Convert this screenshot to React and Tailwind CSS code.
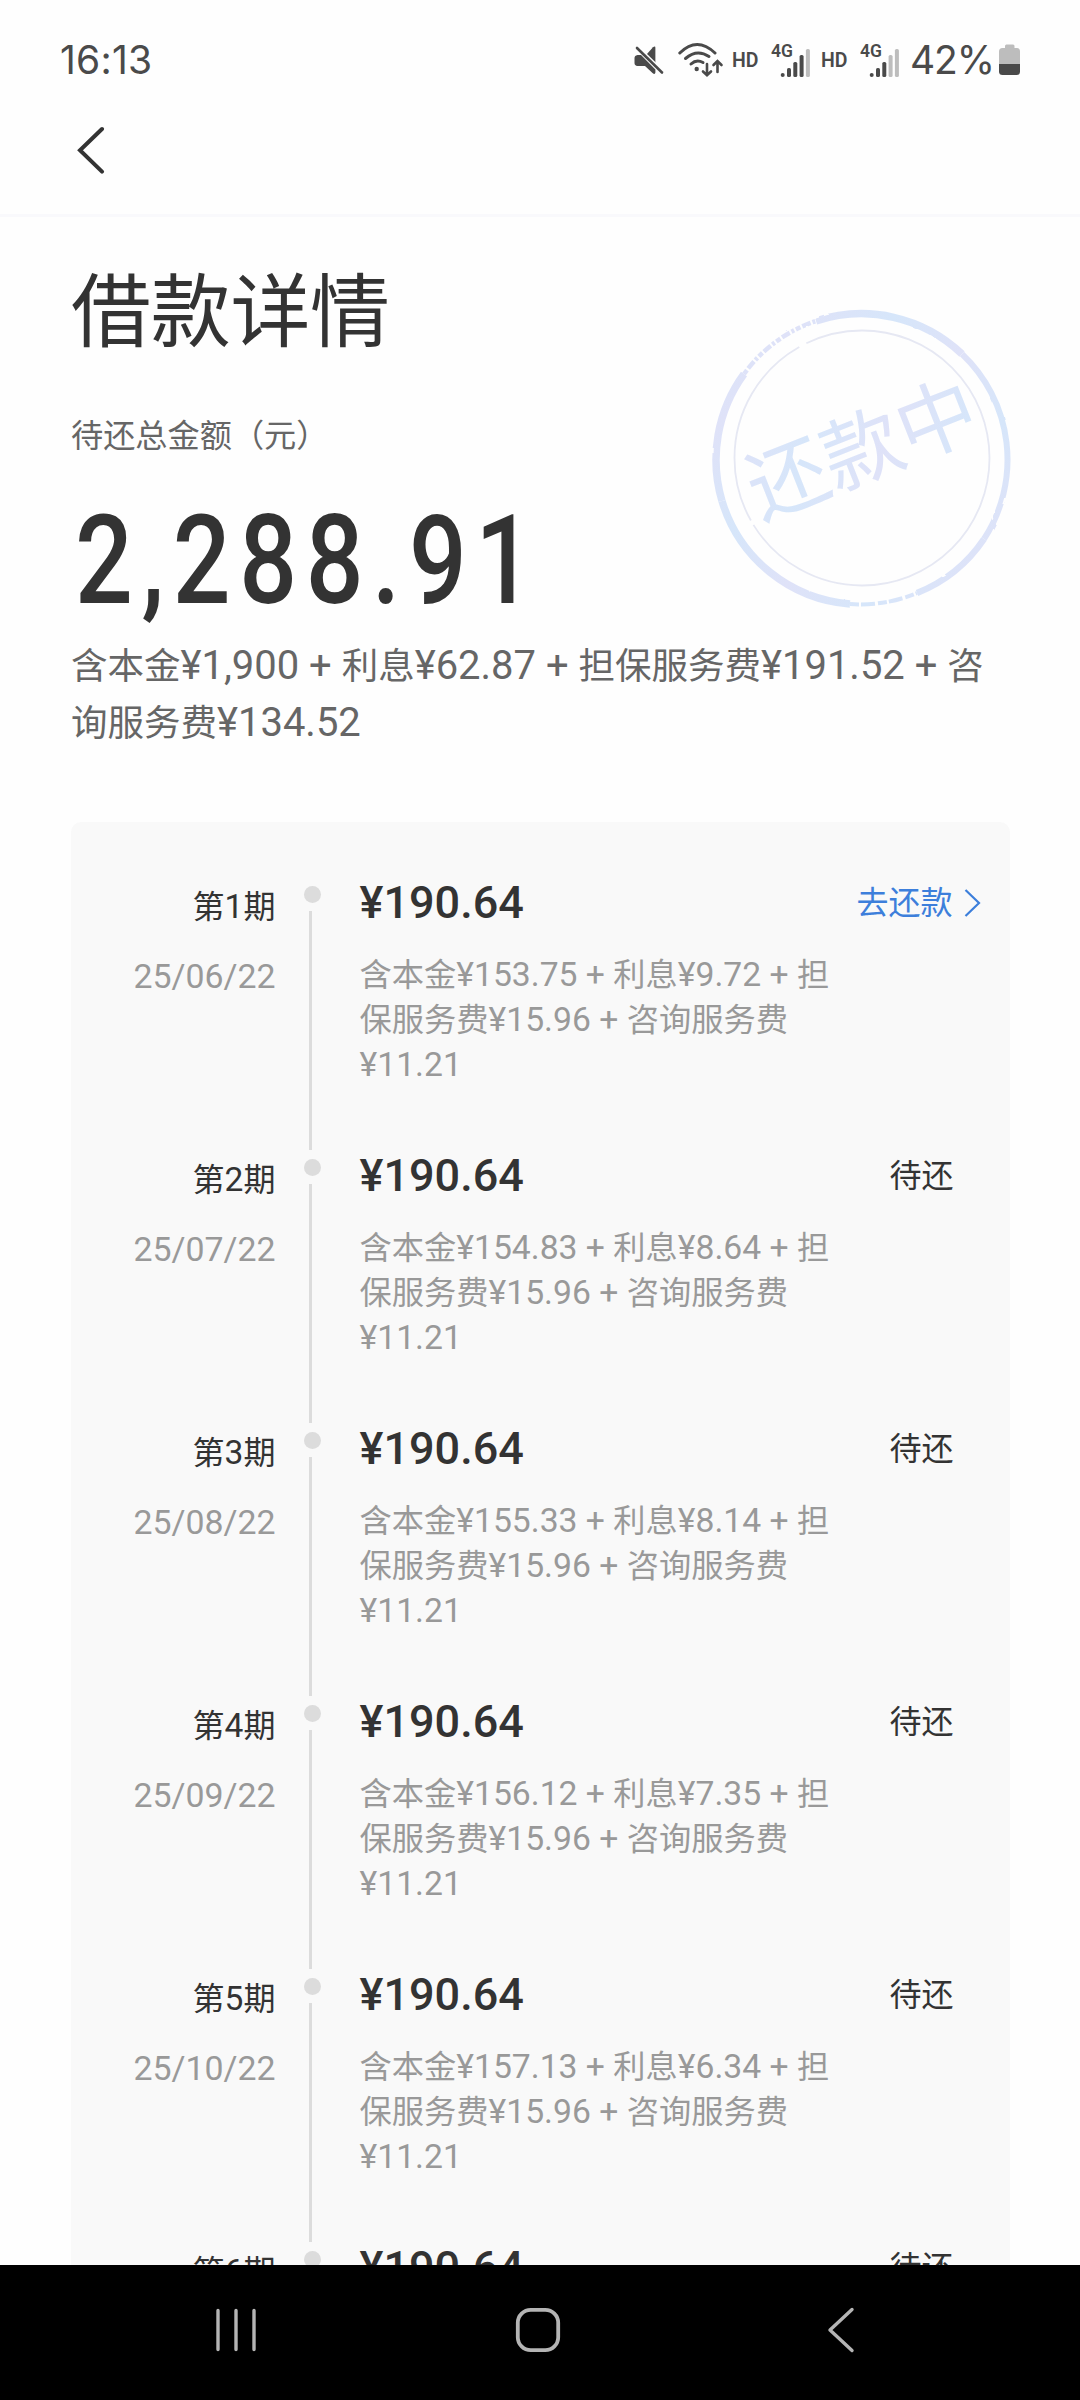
import React from "react";

const installments = [
  { no: 1, date: "25/06/22", principal: "153.75", interest: "9.72", active: true },
  { no: 2, date: "25/07/22", principal: "154.83", interest: "8.64" },
  { no: 3, date: "25/08/22", principal: "155.33", interest: "8.14" },
  { no: 4, date: "25/09/22", principal: "156.12", interest: "7.35" },
  { no: 5, date: "25/10/22", principal: "157.13", interest: "6.34" },
  { no: 6, date: "25/11/22", principal: "158.05", interest: "5.42" },
];

// Latin runs are set a little larger than the Chinese ones
const Mixed = ({ children, latin = "text-[1.045em]" }) =>
  children.split(/([\x20-\x7e¥]+)/).map((part, index) =>
    index % 2 === 1 ? (
      <span key={index} className={`leading-none ${latin}`}>
        {part}
      </span>
    ) : (
      part
    )
  );

const MuteIcon = () => (
  <svg className="w-[30px] h-[30px]" viewBox="0 0 30 30" fill="#4a4a4a">
    <path d="M12.5 9.5 L19 2.2 Q21.4 0.6 21.4 3 V18 Z" />
    <path d="M3 3 L28 27.5" stroke="#fefefe" strokeWidth="5.5" />
    <path d="M3 3 L28 27.5" stroke="#4a4a4a" strokeWidth="2.6" strokeLinecap="round" />
    <path d="M3.5 10 H7 L21.4 24.5 V27.5 Q21 30 18.5 28 L11 21 H3.5 Q0.5 20.5 0.5 18 V13 Q0.5 10.5 3.5 10 Z" />
  </svg>
);

const WifiIcon = () => (
  <svg className="w-[46px] h-[36px]" viewBox="0 0 46 36" fill="none" stroke="#4a4a4a" strokeLinecap="round">
    <path d="M1.8 11 Q19 -6 37 11" strokeWidth="3" />
    <path d="M7.5 16.5 Q19 6.5 31 14.5" strokeWidth="3" />
    <path d="M13 22 Q18.5 17 25 20.5" strokeWidth="3" />
    <circle cx="18.7" cy="27" r="2.2" fill="#4a4a4a" stroke="none" />
    <path d="M29 22 V33 M25 29.5 L29 33.3 L33 29.5" strokeWidth="2.6" />
    <path d="M39.5 30 V20 M35.5 23 L39.5 19 L43.5 23" strokeWidth="2.6" />
  </svg>
);

const SignalIcon = ({ level }) => (
  <svg className="w-[39px] h-[40px] -mt-[5px]" viewBox="0 -6 39 40">
    <text x="0" y="13.2" fontFamily="Roboto" fontWeight="600" fontSize="17.5" fill="#4a4a4a">
      4G
    </text>
    <circle cx="11.7" cy="31" r="2" fill="#4a4a4a" />
    {[24, 18, 11, 5].map((top, index) => (
      <rect
        key={top}
        x={16 + index * 6.3}
        y={top}
        width="4"
        height={33 - top}
        rx="1.6"
        fill={index < level ? "#4a4a4a" : "#bdbdbd"}
      />
    ))}
  </svg>
);

const BatteryIcon = () => (
  <svg className="w-[22px] h-[32px]" viewBox="0 0 22 32">
    <path d="M6 4 V2 Q6 0.5 7.5 0.5 H14 Q15.5 0.5 15.5 2 V4 H18 Q21 4 21 7.5 V20 H0 V7.5 Q0 4 3.5 4 Z" fill="#bdbdbd" />
    <path d="M0 20 H21 V27.5 Q21 31 17.5 31 H3.5 Q0 31 0 27.5 Z" fill="#4a4a4a" />
  </svg>
);

const StatusBar = () => (
  <div className="flex h-[120px] items-center pl-[60px] text-[#4a4a4a]">
    <span className="w-[574px] font-['Inter'] text-[39px] leading-[40px] tracking-[0.2px]">16:13</span>
    <MuteIcon />
    <span className="ml-[14px] flex">
      <WifiIcon />
    </span>
    <span className="ml-[8px] w-[30px] pt-[2px] text-[19.5px] font-semibold">HD</span>
    <span className="ml-[9px] flex">
      <SignalIcon level={3} />
    </span>
    <span className="ml-[11px] w-[30px] pt-[2px] text-[19.5px] font-semibold">HD</span>
    <span className="ml-[9px] flex">
      <SignalIcon level={2} />
    </span>
    <span className="ml-[11px] w-[89px] whitespace-nowrap font-['Inter'] text-[39px] leading-[40px] tracking-[-1.1px]">
      42%
    </span>
    <BatteryIcon />
  </div>
);

const Stamp = () => (
  <svg className="h-[300px] w-[300px]" viewBox="0 0 300 300" fill="none">
    <defs>
      <linearGradient id="ink" x1="0" y1="0" x2="60" y2="45" gradientUnits="userSpaceOnUse" spreadMethod="reflect">
        <stop offset="0" stopColor="#d6e6fa" />
        <stop offset="1" stopColor="#dfe2f8" />
      </linearGradient>
      <filter id="rough">
        <feTurbulence type="fractalNoise" baseFrequency="0.08" numOctaves="2" seed="4" />
        <feDisplacementMap in="SourceGraphic" scale="2" />
      </filter>
    </defs>
    <g stroke="url(#ink)" filter="url(#rough)">
      <path d="M250 45 A145.5 145.5 0 0 1 272 230" strokeWidth="6" />
      <path d="M138 295 A145.5 145.5 0 0 0 205 284" strokeWidth="4" strokeDasharray="9 2 14 3" />
      <path d="M32 65 A145.5 145.5 0 0 1 104 12" strokeWidth="4.5" strokeDasharray="5 2 9 2 3 2" />
      <path d="M104 12 A145.5 145.5 0 0 1 250 45" strokeWidth="7.5" />
      <path d="M32 65 A145.5 145.5 0 0 0 10 192" strokeWidth="7.5" />
      <path d="M10 192 A145.5 145.5 0 0 0 138 295" strokeWidth="7.5" />
      <path d="M272 230 A145.5 145.5 0 0 1 205 284" strokeWidth="6.5" />
    </g>
    <circle cx="150" cy="149" r="127.5" stroke="#e6e8f3" strokeWidth="1.8" strokeDasharray="330 5 200 8" />
    <text
      x="150"
      y="169"
      transform="rotate(-21.5 150 140)"
      textAnchor="middle"
      fontFamily="'Noto Sans CJK SC', sans-serif"
      fontSize="80"
      fill="url(#ink)"
    >
      还款中
    </text>
  </svg>
);

const InstallmentRow = ({ item }) => (
  <div className="flex h-[273px] shrink-0">
    <div className="w-[205px] text-right text-[32.1px]">
      <p className="leading-[48px] text-[#333333]">
        <Mixed>{`第${item.no}期`}</Mixed>
      </p>
      <p className="mt-[22px] leading-[48px] text-[#999999]">
        <Mixed latin="text-[1.055em]">{item.date}</Mixed>
      </p>
    </div>
    <div className="flex w-[84px] flex-col items-start pl-[28px]">
      <div className="mt-[3px] h-[17px] w-[17px] rounded-full bg-[#dcdcdc]" />
      <div className="ml-[5px] mt-[8px] h-[239px] w-[3px] bg-[#dcdcdc]" />
    </div>
    <div className="w-[480px]">
      <p className="-mt-[4px] text-[45px] font-medium leading-[48px] text-[#333333]">¥190.64</p>
      <p className="mt-[26px] whitespace-nowrap text-[32.25px] leading-[45px] text-[#999999]">
        <Mixed>{`含本金¥${item.principal} + 利息¥${item.interest} + 担`}</Mixed>
        <br />
        <Mixed>保服务费¥15.96 + 咨询服务费</Mixed>
        <br />
        <Mixed>¥11.21</Mixed>
      </p>
    </div>
    <div className="-mt-[4px] flex flex-1 justify-end text-[32px] leading-[48px]">
      {item.active ? (
        <span className="flex h-[48px] items-center pr-[29px] text-[#3d7fdb]">
          去还款
          <svg className="ml-[11px] h-[30px] w-[17px]" viewBox="0 0 17 30" fill="none" stroke="#3d7fdb" strokeWidth="2.2">
            <path d="M1.5 2 L15 15 L1.5 28" />
          </svg>
        </span>
      ) : (
        <span className="pr-[56px] text-[#333333]">待还</span>
      )}
    </div>
  </div>
);

const NavBar = () => (
  <div className="flex h-[135px] shrink-0 items-center bg-black pl-[214px] pb-[5px]">
    <svg className="h-[46px] w-[44px]" viewBox="0 0 44 46" stroke="#b4b4b4" strokeWidth="3.4" strokeLinecap="round">
      <path d="M4 3.5 V42.5 M22 3.5 V42.5 M40 3.5 V42.5" />
    </svg>
    <svg className="ml-[257px] h-[46px] w-[46px]" viewBox="0 0 46 46" fill="none" stroke="#b4b4b4" strokeWidth="3.8">
      <rect x="2.8" y="2.8" width="40.4" height="40.4" rx="13" />
    </svg>
    <svg
      className="ml-[265px] h-[48px] w-[30px]"
      viewBox="0 0 30 48"
      fill="none"
      stroke="#b4b4b4"
      strokeWidth="3.4"
      strokeLinecap="round"
      strokeLinejoin="round"
    >
      <path d="M26 3.5 L4 24 L26 44.5" />
    </svg>
  </div>
);

const App = () => {
  return (
    <div className="flex h-[2400px] w-[1080px] flex-col overflow-hidden bg-[#fefefe] font-['Roboto','Noto_Sans_CJK_SC',sans-serif]">
      <StatusBar />
      <div className="h-[97px] shrink-0 border-b-[3px] border-[#f9f9fc] pl-[76px]">
        <svg className="mt-[6px] h-[48px] w-[30px]" viewBox="0 0 30 48" fill="none" stroke="#333333" strokeWidth="4">
          <path d="M26 3 L4 24.3 L26 45.6" strokeLinecap="round" />
        </svg>
      </div>

      <div className="relative h-[605px] shrink-0 px-[71px] pt-[46px]">
        <h1 className="text-[80px] leading-[100px] tracking-[-0.3px] text-[#333333]">借款详情</h1>
        <p className="mt-[49px] text-[32.2px] leading-[48px] text-[#666666]">待还总金额（元）</p>
        <p className="mt-[31px] origin-left scale-x-[0.82] pl-[5px] text-[124px] font-medium leading-[140px] tracking-[10.5px] text-[#333333]">
          2,288.91
        </p>
        <p className="mt-[7px] whitespace-nowrap text-[36.5px] leading-[57px] text-[#666666]">
          <Mixed latin="text-[1.095em]">含本金¥1,900 + 利息¥62.87 + 担保服务费¥191.52 + 咨</Mixed>
          <br />
          <Mixed latin="text-[1.095em]">询服务费¥134.52</Mixed>
        </p>
        <div className="absolute left-[712px] top-[92px]">
          <Stamp />
        </div>
      </div>

      <div className="mx-auto flex min-h-0 w-[939px] flex-1 flex-col overflow-hidden rounded-t-[10px] bg-[#f9f9f9] pt-[61px]">
        {installments.map((item) => (
          <InstallmentRow key={item.no} item={item} />
        ))}
      </div>
      <NavBar />
    </div>
  );
};

export default App;
